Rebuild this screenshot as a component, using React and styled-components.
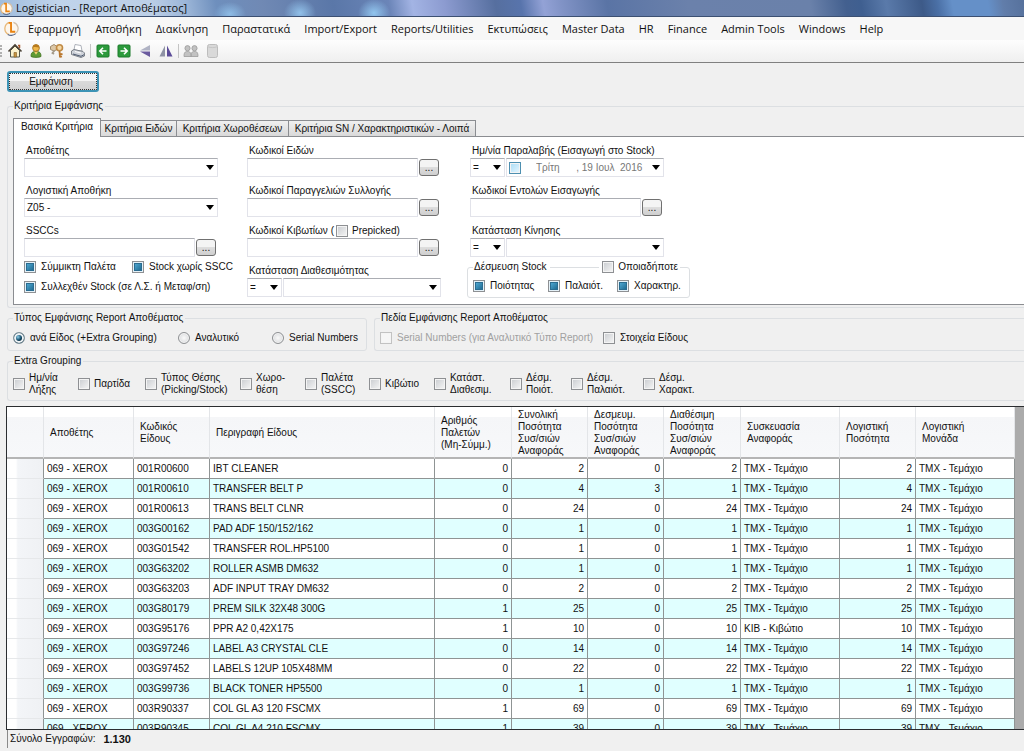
import React from 'react'
import styled, { createGlobalStyle, css } from 'styled-components'

const GlobalStyle = createGlobalStyle`
    *, *::before, *::after {
        box-sizing: border-box;
    }
    body {
        margin: 0;
        overflow: hidden;
        background: #f0f0f0;
    }
    button, input, select, table {
        font: inherit;
        color: inherit;
    }
`

const arrow = `url("data:image/svg+xml,%3Csvg xmlns='http://www.w3.org/2000/svg' width='8' height='5'%3E%3Cpath d='M0 0h8L4 5z' fill='%23000'/%3E%3C/svg%3E")`

const Window = styled.div`
    display: flex;
    flex-direction: column;
    height: 100vh;
    padding-bottom: 3px;
    color: #111;
    font-family: 'Liberation Sans', Arial, sans-serif;
    font-size: 10px;
    line-height: 14px;
`

const TitleBar = styled.header`
    display: flex;
    align-items: center;
    gap: 3px;
    height: 17px;
    flex: none;
    border-bottom: 1px solid #3c5072;
    color: #111;
    font-family: 'Open Sans', sans-serif;
    font-size: 11px;
    background:
        radial-gradient(ellipse 16px 12px at 230px 14px, rgba(150, 200, 240, 0.8), transparent),
        radial-gradient(ellipse 16px 14px at 300px 13px, rgba(150, 200, 240, 0.9), transparent),
        radial-gradient(ellipse 16px 14px at 374px 13px, rgba(150, 205, 245, 0.9), transparent),
        linear-gradient(
            80deg,
            #9fbcdd 0,
            #c0d4eb 60px,
            #bccfe7 150px,
            #9cb6d8 185px,
            #6e8fbd 215px,
            #7089b4 260px,
            #5a77a8 330px,
            #6b85b8 385px,
            #a3b4e4 408px,
            #8c9bd0 440px,
            #566f9f 490px,
            #5874ac 515px,
            #93a2d6 537px,
            #8193c6 555px,
            #5a74a5 600px,
            #6b81ab 680px,
            #6a81aa 800px,
            #43608f 835px,
            #3f5f90 850px,
            #5a7aaa 875px,
            #3d5a88 910px,
            #4a6fa5 925px,
            #6590c8 940px,
            #6590c8 975px,
            #617daa 990px,
            #56719c 100%
        );
`

const MenuBar = styled.nav`
    display: flex;
    align-items: center;
    height: 23px;
    flex: none;
    padding-left: 4px;
    background: #f7f7f7;
    font-family: 'Open Sans', sans-serif;
    font-size: 11px;
`

const MenuLogo = styled.div`
    display: flex;
    width: 24px;
`

const MenuItems = styled.div`
    display: flex;
    gap: 14px;
`

const MenuItem = styled.button`
    padding: 0;
    border: 0;
    background: none;
    white-space: nowrap;
`

const ToolBar = styled.div`
    display: flex;
    align-items: center;
    gap: 5px;
    height: 23px;
    flex: none;
    border-bottom: 1px solid #808080;
    background: linear-gradient(#fdfdfd, #efefef);
`

const Grip = styled.span`
    width: 2px;
    height: 12px;
    border-left: 2px dotted #b0b0b0;
`

const Divider = styled.span`
    width: 1px;
    height: 14px;
    margin: 0 -1px;
    background: #c4c4c4;
`

const IconButton = styled.button`
    display: flex;
    padding: 0;
    border: 0;
    background: none;
`

const Content = styled.main`
    display: flex;
    flex-direction: column;
    flex: 1;
    min-height: 0;
    padding: 8px 0 0 7px;
`

const ShowButton = styled.button`
    width: 92px;
    height: 21px;
    margin-bottom: 7px;
    flex: none;
    align-self: flex-start;
    padding: 0 4px 0 0;
    border: 2px solid #3c93b5;
    border-radius: 3px;
    background: linear-gradient(#f4f4f4 50%, #dadada 50%, #d2d2d2);
    outline: 1px dotted #333;
    outline-offset: -3px;
`

const GroupBox = styled.fieldset`
    min-width: 0;
    margin: 0;
    padding: 0 0 0 5px;
    border: 1px solid #dcdfe2;
    border-radius: 3px;
    ${(p) => p.$open && css`
        border-right: 0;
        border-top-right-radius: 0;
        border-bottom-right-radius: 0;
    `}
`

const GroupTitle = styled.legend`
    padding: 0 2px 0 1px;
    height: 14px;
`

const Groups = styled.div`
    display: flex;
    flex-direction: column;
    flex: none;
    gap: 3px;
`

const Tabs = styled.div`
    display: flex;
    align-items: flex-end;
    height: 23px;
`

const Tab = styled.button`
    width: ${(p) => p.$width}px;
    height: 16px;
    padding: 0;
    border: 1px solid #8b8d91;
    border-bottom: 0;
    border-left-width: ${(p) => (p.$first ? 1 : 0)}px;
    background: linear-gradient(#f0f0f0, #d9d9d9);
    white-space: nowrap;
    &[aria-selected='true'] {
        height: 19px;
        margin-bottom: -1px;
        padding-bottom: 2px;
        background: #fff;
    }
`

const TabPanel = styled.div`
    display: grid;
    grid-template-columns: 223px 220px 226px;
    height: 169px;
    margin-bottom: 2px;
    padding: 6px 0 0 10px;
    border: 1px solid #8b8d91;
    border-right: 0;
    background: #fff;
`

const Column = styled.div`
    display: flex;
    flex-direction: column;
`

const Field = styled.div`
    height: ${(p) => (p.$last ? 34 : 40)}px;
    padding-left: ${(p) => (p.$inset ? 3 : 0)}px;
`

const FieldLabel = styled.label`
    display: flex;
    align-items: center;
    gap: 2px;
    height: 15px;
    padding-left: 2px;
    white-space: nowrap;
`

const FieldRow = styled.div`
    display: flex;
    align-items: center;
    gap: 1px;
    height: 19px;
`

const inputBox = css`
    height: 19px;
    border: 1px solid #e2e3ea;
    border-top-color: #abadb3;
    border-radius: 0;
    background-color: #fff;
`

const TextInput = styled.input`
    ${inputBox}
    width: 171px;
    padding: 0 2px;
`

const Select = styled.select`
    ${inputBox}
    width: ${(p) => p.$width}px;
    padding: 0 16px 0 2px;
    appearance: none;
    background-image: ${arrow};
    background-position: right 3px center;
    background-repeat: no-repeat;
`

const BrowseButton = styled.button`
    width: 20px;
    height: 17px;
    padding: 0;
    border: 1px solid #707070;
    border-radius: 3px;
    background: linear-gradient(#f4f4f4 50%, #dddddd 50%, #cfcfcf);
    line-height: 12px;
`

const DateBox = styled.div`
    ${inputBox}
    display: flex;
    align-items: center;
    width: 158px;
    padding: 0 3px 0 2px;
`

const DateInput = styled.input`
    flex: 1;
    min-width: 0;
    padding: 0 0 0 15px;
    border: 0;
    background: none;
    color: #777;
`

const DropButton = styled.button`
    width: 8px;
    height: 12px;
    padding: 0;
    border: 0;
    background: ${arrow} center no-repeat;
`

const Box = styled.input`
    flex: none;
    width: 12px;
    height: 12px;
    margin: 0;
    appearance: none;
    border: 1px solid #8e9093;
    background: linear-gradient(135deg, #c9ccd0, #f6f6f6);
    box-shadow: inset 0 0 0 1px #f4f4f4;
    &:checked {
        background: linear-gradient(135deg, #5cb9e4, #11597f);
        box-shadow: inset 0 0 0 1px #e4f1f8, inset 0 0 0 2px #2a6c90;
    }
    &:disabled {
        border-color: #c2c2c2;
        background: #f6f6f6;
    }
    ${(p) => p.$hot && css`
        border-color: #4d8fb0;
        background: linear-gradient(135deg, #a9dcf5, #e8f7ff);
    `}
`

const Radio = styled(Box)`
    border-radius: 50%;
    background: radial-gradient(#fafafa, #d0d2d5);
    &:checked {
        border-color: #7d9099;
        background: radial-gradient(circle at 4px 4px, #8fd0ea 0, #16506f 3px, #0d3246 4px);
        box-shadow: inset 0 0 0 2px #eef3f6;
    }
`

const CheckLabel = styled.label`
    display: flex;
    align-items: center;
    gap: ${(p) => p.$gap || 5}px;
    color: ${(p) => (p.$muted ? '#a0a0a0' : 'inherit')};
    line-height: 12px;
    white-space: pre;
`

const CheckRow = styled.div`
    display: grid;
    grid-template-columns: ${(p) => p.$columns};
    align-items: center;
    height: ${(p) => p.$height}px;
`

const BindTitle = styled.legend`
    display: flex;
    align-items: center;
    gap: 3px;
    width: 207px;
    height: 14px;
    padding-left: 1px;
    white-space: nowrap;
`

const Rule = styled.span`
    flex: 1;
    height: 1px;
    background: #dcdfe2;
`

const BindBox = styled(GroupBox)`
    width: 223px;
    height: 38px;
    margin-top: -3px;
`

const SplitRow = styled.div`
    display: grid;
    grid-template-columns: 360px 1fr;
    gap: 7px;
`

const GridArea = styled.section`
    flex: 1;
    min-height: 0;
    margin: 5px 0 0 -1px;
    overflow: hidden;
    border: 1px solid #2b2d30;
    border-right: 0;
    background: #ababab;
`

const Table = styled.table`
    width: 1007px;
    table-layout: fixed;
    border-collapse: separate;
    border-spacing: 0;
    background: #fff;
`

const HeadCell = styled.th`
    height: 52px;
    padding: 2px 0 0 6px;
    border-right: 1px solid #e3e5e8;
    border-bottom: 2px solid #b5b5b5;
    background: linear-gradient(#fff 20%, #f5f6f8 20%, #f7f8fa);
    font-weight: 400;
    line-height: 12px;
    text-align: left;
    white-space: pre;
`

const Row = styled.tr`
    height: 20px;
    background: #fff;
    &:nth-child(even) {
        background: #e0ffff;
    }
`

const Cell = styled.td`
    padding: 0 3px;
    border-right: 1px solid #8f9494;
    border-bottom: 1px solid #8f9494;
    overflow: hidden;
    text-align: ${(p) => (p.$number ? 'right' : 'left')};
    white-space: nowrap;
`

const RowHeader = styled.th`
    padding: 0;
    border-right: 1px solid #8f9494;
    border-bottom: 1px solid #e6e8ea;
    background: linear-gradient(90deg, #fff 25%, #f3f5f8 30%, #eff1f4);
`

const StatusBar = styled.footer`
    display: flex;
    align-items: center;
    gap: 8px;
    height: 18px;
    flex: none;
    margin-left: 7px;
    padding-left: 2px;
    border-left: 1px solid #8a8a8a;
`

const Total = styled.strong`
    font-size: 11px;
`

const Logo = ({ size }) => (
    <svg width={size} height={size} viewBox="0 0 16 16" fill="none">
        <circle cx="8" cy="8" r="6.8" fill="#fdf6ec" />
        <path d="M6 1.500a6.800 6.800 0 0 0-1 12.800" stroke="#e8b878" strokeWidth="1.400" />
        <path d="M10 1.400a6.800 6.800 0 0 1 3 11.400" stroke="#d3c0a8" strokeWidth="1.400" />
        <path d="M4 14.300c3 1.500 6 1.200 8.500-.8" stroke="#4f5f80" strokeWidth="1.200" />
        <path d="M5 2h2.500v9.500H12" stroke="#e9820f" strokeWidth="2" />
    </svg>
)

const Icon = ({ children }) => (
    <svg width="16" height="16" viewBox="0 0 16 16" fill="none">
        {children}
    </svg>
)

const HomeIcon = () => (
    <Icon>
        <path d="M3.500 7.500 8 3l4.500 4.500v6.500h-9z" fill="#fbf3cf" stroke="#555a50" />
        <path d="M1.500 8.500 8 2l6.500 6.500" stroke="#4a4236" strokeWidth="1.600" />
        <path d="M11 2.500h1.500V5" stroke="#a8582c" strokeWidth="1.500" />
        <path d="M7 9.500h2.500V14H7z" fill="#c99540" stroke="#7d5a24" strokeWidth=".6" />
    </Icon>
)

const UserIcon = () => (
    <Icon>
        <path d="M3 13.500c0-4 1.500-5 5-5s5 1 5 5c-2 1.200-8 1.200-10 0z" fill="#5f9a35" stroke="#3f7020" strokeWidth=".8" />
        <path d="m6 8.800 2 3 2-3" fill="#f0d070" />
        <circle cx="8" cy="5" r="3.400" fill="#f0b84a" stroke="#9c6b1c" strokeWidth=".8" />
        <path d="M4.800 4.500c0-4 6.400-4 6.400 0-2-.2-4-.8-6.400 0z" fill="#b87a1d" />
    </Icon>
)

const KeysIcon = () => (
    <Icon>
        <path d="M1.500 3.500 5 1.500l3 2v3l-3 1.500-3.500-1.500z" fill="#dcc7a6" stroke="#a08a6c" />
        <path d="m5.500 7.500-2 2.500 1.500 1" stroke="#a59a8a" strokeWidth="1.800" />
        <circle cx="10.500" cy="4.800" r="3" fill="#f3d7a4" stroke="#c08a45" strokeWidth="1.600" />
        <path d="m10.500 8 .5 6.500M11 11.500l2.500-.5M11 14l2-.5" stroke="#b9772e" strokeWidth="1.800" />
    </Icon>
)

const PrinterIcon = () => (
    <Icon>
        <path d="m4 7 1-5.500 6 1L12 8z" fill="#fff" stroke="#9aa0aa" strokeWidth=".8" />
        <path d="M1.500 8 4 6.500l9 2 1.500 1.500v3l-3.500 1.500-9.500-3z" fill="#cfd3da" stroke="#72777f" strokeWidth=".9" />
        <path d="m3 11 8 2.300 3-1.600" stroke="#4d5a70" />
        <path d="m5 8.500 6 1.500" stroke="#fff" />
    </Icon>
)

const ArrowIcon = ({ right }) => (
    <Icon>
        <rect x="2" y="2" width="12" height="12" rx="1" fill="#2c9a3c" stroke="#1b7a2a" />
        <path
            d={right ? 'M4.500 8h6M8 4.800 11.200 8 8 11.200' : 'M11.500 8h-6M8 4.800 4.800 8 8 11.200'}
            stroke="#fff"
            strokeWidth="1.600"
        />
    </Icon>
)

const FlipVerticalIcon = () => (
    <Icon>
        <path d="M13 2v5.500H3z" fill="#b0b3c4" />
        <path d="M3 8.500h10V14z" fill="#6a5a9e" />
    </Icon>
)

const FlipHorizontalIcon = () => (
    <Icon>
        <path d="M7 2.500V13.500H1.500z" fill="#8f93a5" />
        <path d="M9 2.500v11h5.500z" fill="#5b4b98" />
    </Icon>
)

const UsersIcon = () => (
    <Icon>
        <g fill="#c2c2c2" stroke="#9b9b9b" strokeWidth=".8">
            <path d="M8 13.500c0-4 1-5 3.500-5s3.500 1 3.500 5z" />
            <circle cx="11.500" cy="5.200" r="2.600" />
            <path d="M1 13.500c0-4 1-5 3.500-5s3.500 1 3.500 5z" />
            <circle cx="4.500" cy="5.200" r="2.600" />
        </g>
    </Icon>
)

const DatabaseIcon = () => (
    <Icon>
        <rect x="3.500" y="1.500" width="10" height="13" rx="2" fill="#d9d9d9" stroke="#bdbdbd" />
        <path d="M4 3.800c2 1 7 1 9 0" stroke="#c6c6c6" />
    </Icon>
)

const menuItems = [
    'Εφαρμογή', 'Αποθήκη', 'Διακίνηση', 'Παραστατικά', 'Import/Export', 'Reports/Utilities',
    'Εκτυπώσεις', 'Master Data', 'HR', 'Finance', 'Admin Tools', 'Windows', 'Help'
]

const tools = [
    ['Home', <HomeIcon />],
    ['User', <UserIcon />],
    ['Keys', <KeysIcon />],
    ['Print', <PrinterIcon />],
    null,
    ['Back', <ArrowIcon />],
    ['Forward', <ArrowIcon right />],
    ['Flip vertical', <FlipVerticalIcon />],
    ['Flip horizontal', <FlipHorizontalIcon />],
    null,
    ['Users', <UsersIcon />],
    ['Database', <DatabaseIcon />]
]

const tabs = [
    ['Βασικά Κριτήρια', 88],
    ['Κριτήρια Ειδών', 76],
    ['Κριτήρια Χωροθέσεων', 112],
    ['Κριτήρια SN / Χαρακτηριστικών - Λοιπά', 187]
]

const groupings = [
    'Ημ/νία\nΛήξης', 'Παρτίδα', 'Τύπος Θέσης\n(Picking/Stock)', 'Χωρο-\nθέση', 'Παλέτα\n(SSCC)',
    'Κιβώτιο', 'Κατάστ.\nΔιαθεσιμ.', 'Δέσμ.\nΠοιότ.', 'Δέσμ.\nΠαλαιότ.', 'Δέσμ.\nΧαρακτ.'
]

const columns = [
    { title: 'Αποθέτης', width: 90 },
    { title: 'Κωδικός\nΕίδους', width: 76 },
    { title: 'Περιγραφή Είδους', width: 225 },
    { title: 'Αριθμός\nΠαλετών\n(Μη-Σύμμ.)', width: 77, number: true },
    { title: 'Συνολική\nΠοσότητα\nΣυσ/σιών\nΑναφοράς', width: 76, number: true },
    { title: 'Δεσμευμ.\nΠοσότητα\nΣυσ/σιών\nΑναφοράς', width: 76, number: true },
    { title: 'Διαθέσιμη\nΠοσότητα\nΣυσ/σιών\nΑναφοράς', width: 77, number: true },
    { title: 'Συσκευασία\nΑναφοράς', width: 99 },
    { title: 'Λογιστική\nΠοσότητα', width: 76, number: true },
    { title: 'Λογιστική\nΜονάδα', width: 99 }
]

const piece = 'ΤΜΧ - Τεμάχιο'

const items = [
    ['001R00600', 'IBT CLEANER', 0, 2, 0, 2, piece],
    ['001R00610', 'TRANSFER BELT P', 0, 4, 3, 1, piece],
    ['001R00613', 'TRANS BELT CLNR', 0, 24, 0, 24, piece],
    ['003G00162', 'PAD ADF 150/152/162', 0, 1, 0, 1, piece],
    ['003G01542', 'TRANSFER ROL.HP5100', 0, 1, 0, 1, piece],
    ['003G63202', 'ROLLER ASMB DM632', 0, 1, 0, 1, piece],
    ['003G63203', 'ADF INPUT TRAY DM632', 0, 2, 0, 2, piece],
    ['003G80179', 'PREM SILK 32X48 300G', 1, 25, 0, 25, piece],
    ['003G95176', 'PPR A2 0,42X175', 1, 10, 0, 10, 'ΚΙΒ - Κιβώτιο'],
    ['003G97246', 'LABEL A3 CRYSTAL CLE', 0, 14, 0, 14, piece],
    ['003G97452', 'LABELS 12UP 105X48MM', 0, 22, 0, 22, piece],
    ['003G99736', 'BLACK TONER HP5500', 0, 1, 0, 1, piece],
    ['003R90337', 'COL GL A3 120 FSCMX', 1, 69, 0, 69, piece],
    ['003R90345', 'COL GL A4 210 FSCMX', 1, 39, 0, 39, piece]
]

// the accounting quantity is always the total, bound stock included
const rows = items.map(([code, name, pallets, total, bound, free, unit]) => [
    '069 - XEROX', code, name, pallets, total, bound, free, unit, total, piece
])

const Check = ({ label, gap, muted, ...rest }) => (
    <CheckLabel $gap={gap} $muted={muted}>
        <Box type="checkbox" disabled={muted} {...rest} />
        {label}
    </CheckLabel>
)

const BrowseField = ({ id, label, inset, last }) => (
    <Field $inset={inset} $last={last}>
        <FieldLabel htmlFor={id}>{label}</FieldLabel>
        <FieldRow>
            <TextInput id={id} />
            <BrowseButton aria-label="Browse">...</BrowseButton>
        </FieldRow>
    </Field>
)

const SelectField = ({ id, label, value = '' }) => (
    <Field>
        <FieldLabel htmlFor={id}>{label}</FieldLabel>
        <FieldRow>
            <Select id={id} $width={194}>
                <option>{value}</option>
            </Select>
        </FieldRow>
    </Field>
)

const Operator = () => (
    <Select $width={35} aria-label="Operator">
        <option>=</option>
    </Select>
)

const StateField = ({ id, label, inset, last }) => (
    <Field $inset={inset} $last={last}>
        <FieldLabel htmlFor={id}>{label}</FieldLabel>
        <FieldRow>
            <Operator />
            <Select id={id} $width={158}>
                <option></option>
            </Select>
        </FieldRow>
    </Field>
)

const BasicCriteria = () => (
    <TabPanel role="tabpanel">
        <Column>
            <SelectField id="depositor" label="Αποθέτης" />
            <SelectField id="warehouse" label="Λογιστική Αποθήκη" value="Z05 -" />
            <BrowseField id="sscc" label="SSCCs" last />
            <CheckRow $columns="108px auto" $height={20}>
                <Check label="Σύμμικτη Παλέτα" defaultChecked />
                <Check label="Stock χωρίς SSCC" defaultChecked />
            </CheckRow>
            <CheckRow $columns="auto" $height={20}>
                <Check label="Συλλεχθέν Stock (σε Λ.Σ. ή Μεταφ/ση)" defaultChecked />
            </CheckRow>
        </Column>
        <Column>
            <BrowseField id="items" label="Κωδικοί Ειδών" />
            <BrowseField id="orders" label="Κωδικοί Παραγγελιών Συλλογής" />
            <Field>
                <FieldLabel as="div">
                    <label htmlFor="boxes">Κωδικοί Κιβωτίων (</label>
                    <Check label="Prepicked)" gap={4} />
                </FieldLabel>
                <FieldRow>
                    <TextInput id="boxes" />
                    <BrowseButton aria-label="Browse">...</BrowseButton>
                </FieldRow>
            </Field>
            <StateField id="availability" label="Κατάσταση Διαθεσιμότητας" last />
        </Column>
        <Column>
            <Field $inset>
                <FieldLabel htmlFor="received">Ημ/νία Παραλαβής (Εισαγωγή στο Stock)</FieldLabel>
                <FieldRow>
                    <Operator />
                    <DateBox>
                        <Box type="checkbox" $hot aria-label="Use date" />
                        <DateInput id="received" defaultValue="Τρίτη      , 19 Ιουλ  2016" />
                        <DropButton aria-label="Open calendar" />
                    </DateBox>
                </FieldRow>
            </Field>
            <BrowseField id="imports" label="Κωδικοί Εντολών Εισαγωγής" inset />
            <StateField id="movement" label="Κατάσταση Κίνησης" inset />
            <BindBox>
                <BindTitle>
                    Δέσμευση Stock
                    <Rule />
                    <Check label="Οποιαδήποτε" gap={4} />
                </BindTitle>
                <CheckRow $columns="75px 69px auto" $height={23}>
                    <Check label="Ποιότητας" defaultChecked />
                    <Check label="Παλαιότ." defaultChecked />
                    <Check label="Χαρακτηρ." defaultChecked />
                </CheckRow>
            </BindBox>
        </Column>
    </TabPanel>
)

const StockGrid = () => (
    <GridArea>
        <Table>
            <colgroup>
                <col width={37} />
                {columns.map((c) => (
                    <col key={c.title} width={c.width} />
                ))}
            </colgroup>
            <thead>
                <tr>
                    <HeadCell />
                    {columns.map((c) => (
                        <HeadCell key={c.title} scope="col">{c.title}</HeadCell>
                    ))}
                </tr>
            </thead>
            <tbody>
                {rows.map((row) => (
                    <Row key={row[1]}>
                        <RowHeader scope="row" />
                        {row.map((value, i) => (
                            <Cell key={i} $number={columns[i].number}>{value}</Cell>
                        ))}
                    </Row>
                ))}
            </tbody>
        </Table>
    </GridArea>
)

const App = () => (
    <Window>
        <GlobalStyle />
        <TitleBar>
            <Logo size={13} />
            Logistician - [Report Αποθέματος]
        </TitleBar>
        <MenuBar>
            <MenuLogo>
                <Logo size={15} />
            </MenuLogo>
            <MenuItems>
                {menuItems.map((item) => (
                    <MenuItem key={item}>{item}</MenuItem>
                ))}
            </MenuItems>
        </MenuBar>
        <ToolBar>
            <Grip />
            {tools.map((tool, i) =>
                tool ? (
                    <IconButton key={i} aria-label={tool[0]}>{tool[1]}</IconButton>
                ) : (
                    <Divider key={i} />
                )
            )}
        </ToolBar>
        <Content>
            <ShowButton>Εμφάνιση</ShowButton>
            <Groups>
                <GroupBox $open>
                    <GroupTitle>Κριτήρια Εμφάνισης</GroupTitle>
                    <Tabs role="tablist">
                        {tabs.map(([title, width], i) => (
                            <Tab key={title} role="tab" aria-selected={i === 0} $first={i === 0} $width={width}>
                                {title}
                            </Tab>
                        ))}
                    </Tabs>
                    <BasicCriteria />
                </GroupBox>
                <SplitRow>
                    <GroupBox>
                        <GroupTitle>Τύπος Εμφάνισης Report Αποθέματος</GroupTitle>
                        <CheckRow $columns="165px 94px auto" $height={25}>
                            <CheckLabel>
                                <Radio type="radio" name="kind" defaultChecked />
                                ανά Είδος (+Extra Grouping)
                            </CheckLabel>
                            <CheckLabel>
                                <Radio type="radio" name="kind" />
                                Αναλυτικό
                            </CheckLabel>
                            <CheckLabel>
                                <Radio type="radio" name="kind" />
                                Serial Numbers
                            </CheckLabel>
                        </CheckRow>
                    </GroupBox>
                    <GroupBox $open>
                        <GroupTitle>Πεδία Εμφάνισης Report Αποθέματος</GroupTitle>
                        <CheckRow $columns="223px auto" $height={25}>
                            <Check label="Serial Numbers (για Αναλυτικό Τύπο Report)" muted />
                            <Check label="Στοιχεία Είδους" />
                        </CheckRow>
                    </GroupBox>
                </SplitRow>
                <GroupBox $open>
                    <GroupTitle>Extra Grouping</GroupTitle>
                    <CheckRow $columns="65px 67px 95px 65px 64px 65px 76px 61px 72px auto" $height={32}>
                        {groupings.map((label) => (
                            <Check key={label} label={label} gap={4} />
                        ))}
                    </CheckRow>
                </GroupBox>
            </Groups>
            <StockGrid />
        </Content>
        <StatusBar>
            <span>Σύνολο Εγγραφών:</span>
            <Total>1.130</Total>
        </StatusBar>
    </Window>
)

export default App
